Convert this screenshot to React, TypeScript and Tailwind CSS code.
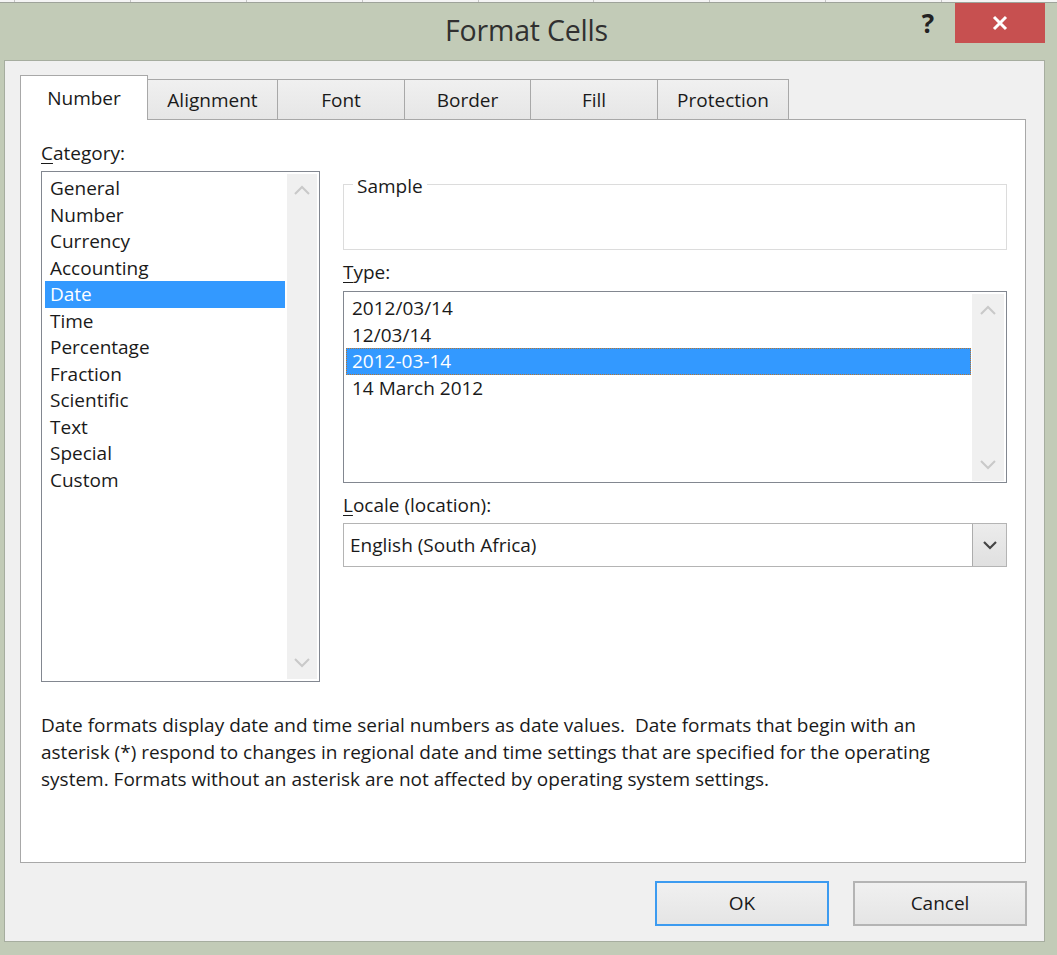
import React from 'react';

const font = { fontFamily: '"Open Sans", "Noto Sans", sans-serif' };

const categories = [
  'General', 'Number', 'Currency', 'Accounting', 'Date', 'Time',
  'Percentage', 'Fraction', 'Scientific', 'Text', 'Special', 'Custom',
];

const types = ['2012/03/14', '12/03/14', '2012-03-14', '14 March 2012'];

const tabs = ['Alignment', 'Font', 'Border', 'Fill', 'Protection'];
const tabWidths = ['w-[130px]', 'w-[127px]', 'w-[126px]', 'w-[127px]', 'w-[131px]'];

function Chevron({ up, className }: { up?: boolean; className?: string }) {
  return (
    <svg width="16" height="10" viewBox="0 0 16 10" className={className}>
      <path
        d={up ? 'M1 9 L8 2 L15 9' : 'M1 1 L8 8 L15 1'}
        fill="none"
        stroke="currentColor"
        strokeWidth="2"
      />
    </svg>
  );
}

function ScrollTrack({ w }: { w: string }) {
  return (
    <div className={`${w} shrink-0 bg-[#f0f0f0] flex flex-col items-center justify-between py-[11px] text-[#c9c9c9]`}>
      <Chevron up />
      <Chevron />
    </div>
  );
}

function Accel({ k, rest }: { k: string; rest: string }) {
  return (
    <span>
      <span className="underline underline-offset-[3px] decoration-1">{k}</span>
      {rest}
    </span>
  );
}

export default function App() {
  return (
    <div className="w-[1057px] h-[955px] bg-[#c2cbb7] flex flex-col overflow-hidden text-[#1a1a1a]" style={font}>
      {/* excel grid behind */}
      <div className="h-[3px] bg-[#f4f4f4] border-b border-[#9ea39a] flex pl-[14px] shrink-0">
        {Array.from({ length: 9 }).map((_, i) => (
          <div key={i} className="w-[125px] h-full border-l border-[#c4c4c4]" />
        ))}
      </div>

      {/* title bar */}
      <div className="h-[57px] shrink-0 flex items-start">
        <div className="w-[149px] shrink-0" />
        <div className="flex-1 flex justify-center pt-[7px]">
          <span className="text-[28.5px] leading-[40px] text-[#303030] tracking-[-0.2px] -ml-[4px]">Format Cells</span>
        </div>
        <div className="w-[149px] shrink-0 flex items-start">
          <div className="w-[40px] text-[26px] leading-[40px] font-bold text-[#222] text-center mr-[7px]">?</div>
          <div className="w-[90px] h-[40px] bg-[#c75050] flex items-center justify-center">
            <svg width="16" height="16" viewBox="0 0 16 16">
              <path d="M2 2 L14 14 M14 2 L2 14" stroke="#fff" strokeWidth="3" />
            </svg>
          </div>
        </div>
      </div>

      {/* dialog body */}
      <div className="ml-[4px] mr-[12px] h-[882px] shrink-0 bg-[#f0f0f0] border border-[#a6ad9f] flex flex-col pl-[15px] pt-[14px]">
        {/* tabs */}
        <div className="flex items-end h-[44px]">
          <div className="relative z-10 w-[128px] h-[45px] -mb-px bg-white border border-b-0 border-[#a8a8a8] flex items-center justify-center text-[19px]">
            Number
          </div>
          {tabs.map((t, i) => (
            <div
              key={t}
              className={`${tabWidths[i]} h-[40px] bg-gradient-to-b from-[#f0f0f0] to-[#e6e6e6] border border-l-0 border-b-0 border-[#a8a8a8] flex items-center justify-center text-[19px] pt-[2px]`}
            >
              {t}
            </div>
          ))}
        </div>

        {/* tab panel */}
        <div className="w-[1006px] h-[744px] bg-white border border-[#a8a8a8] flex flex-col pl-[20px] pt-[20px] text-[19px]">
          <div className="flex">
            {/* category column */}
            <div className="w-[279px] flex flex-col">
              <div className="h-[26px] leading-[26px]">
                <Accel k="C" rest="ategory:" />
              </div>
              <div className="mt-[5px] h-[511px] border border-[#828790] p-[2px] flex">
                <div className="flex-1 pt-[1px] pl-[1px] pr-[2px]">
                  {categories.map(c => (
                    <div
                      key={c}
                      className={`h-[26.5px] leading-[26.5px] pl-[5px] ${c === 'Date' ? 'bg-[#3399ff] text-white' : ''}`}
                    >
                      {c}
                    </div>
                  ))}
                </div>
                <ScrollTrack w="w-[30px]" />
              </div>
            </div>

            {/* right column */}
            <div className="ml-[23px] w-[664px] flex flex-col">
              <div className="mt-[44px] h-[66px] border border-[#dcdcdc] relative">
                <span className="absolute -top-[12px] left-[9px] bg-white px-[4px] leading-[26px]">Sample</span>
              </div>
              <div className="mt-[9px] h-[26px] leading-[26px]">
                <Accel k="T" rest="ype:" />
              </div>
              <div className="mt-[6px] h-[192px] border border-[#828790] p-[2px] pb-[1px] flex">
                <div className="flex-1 pt-[1px] pr-[1px]">
                  {types.map(t => (
                    <div
                      key={t}
                      className={`h-[26.5px] leading-[25px] pl-[5px] ${t === '2012-03-14' ? 'bg-[#3399ff] text-white border border-dotted border-[#b8742f]' : 'border border-transparent'}`}
                    >
                      {t}
                    </div>
                  ))}
                </div>
                <ScrollTrack w="w-[32px]" />
              </div>
              <div className="mt-[9px] h-[26px] leading-[26px]">
                <Accel k="L" rest="ocale (location):" />
              </div>
              <div className="mt-[5px] h-[44px] border border-[#b4b4b4] flex">
                <div className="flex-1 flex items-center pl-[6px]">English (South Africa)</div>
                <div className="w-[34px] bg-gradient-to-b from-[#ececec] to-[#e0e0e0] border-l border-[#acacac] flex items-center justify-center text-[#444]">
                  <svg width="14" height="9" viewBox="0 0 14 9">
                    <path d="M1 1 L7 7 L13 1" fill="none" stroke="currentColor" strokeWidth="2.2" />
                  </svg>
                </div>
              </div>
            </div>
          </div>

          <p className="mt-[30px] w-[935px] leading-[27px]">
            Date formats display date and time serial numbers as date values.&nbsp; Date formats that begin with an
            asterisk (*) respond to changes in regional date and time settings that are specified for the operating
            system. Formats without an asterisk are not affected by operating system settings.
          </p>
        </div>

        {/* buttons */}
        <div className="mt-[18px] w-[1007px] flex justify-end gap-[24px] text-[19px]">
          <button className="w-[174px] h-[45px] border-2 border-[#3c9bf0] bg-gradient-to-b from-[#f0f0f0] to-[#e5e5e5]">
            OK
          </button>
          <button className="w-[174px] h-[45px] border-2 border-[#b4b4b4] bg-gradient-to-b from-[#f0f0f0] to-[#e5e5e5]">
            Cancel
          </button>
        </div>
      </div>
    </div>
  );
}
